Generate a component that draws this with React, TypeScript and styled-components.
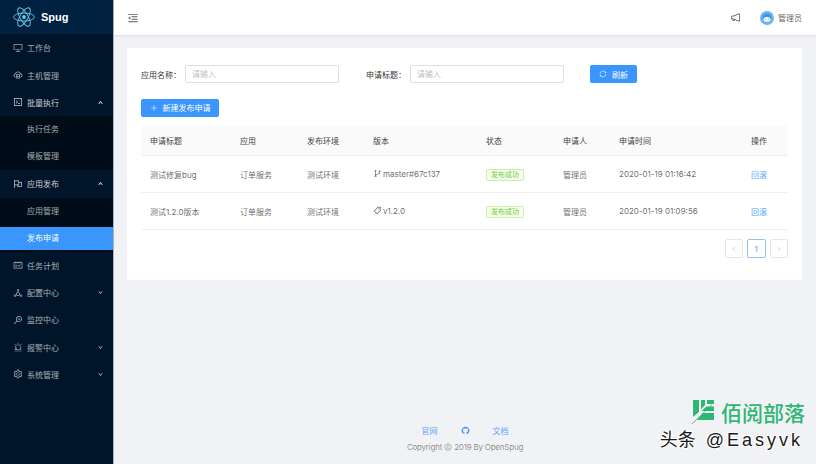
import React from 'react';
import styled, { createGlobalStyle } from 'styled-components';
import {
  AiOutlineDesktop, AiOutlineCloudServer, AiOutlineCode, AiOutlineFlag, AiOutlineSchedule,
  AiOutlineDeploymentUnit, AiOutlineMonitor, AiOutlineAlert, AiOutlineSetting, AiOutlineMenuFold,
  AiOutlineNotification, AiOutlineBranches, AiOutlineTag, AiOutlineSync, AiOutlinePlus,
  AiOutlineUp, AiOutlineDown, AiOutlineLeft, AiOutlineRight, AiFillGithub, AiOutlineCopyright,
} from 'react-icons/ai';

const GlobalStyle = createGlobalStyle`
  html, body { margin: 0; padding: 0; }
  body {
    width: 816px;
    height: 464px;
    overflow: hidden;
    font-family: Inter, "Noto Sans CJK SC", sans-serif;
    font-size: 8px;
    background: #f0f2f5;
  }
  * { box-sizing: border-box; }
`;

const menu = [
  { icon: <AiOutlineDesktop />, label: '工作台' },
  { icon: <AiOutlineCloudServer />, label: '主机管理' },
  { icon: <AiOutlineCode />, label: '批量执行', arrow: 'up', subs: [{ label: '执行任务' }, { label: '模板管理' }] },
  { icon: <AiOutlineFlag />, label: '应用发布', arrow: 'up', subs: [{ label: '应用管理' }, { label: '发布申请', active: true }] },
  { icon: <AiOutlineSchedule />, label: '任务计划' },
  { icon: <AiOutlineDeploymentUnit />, label: '配置中心', arrow: 'down' },
  { icon: <AiOutlineMonitor />, label: '监控中心' },
  { icon: <AiOutlineAlert />, label: '报警中心', arrow: 'down' },
  { icon: <AiOutlineSetting />, label: '系统管理', arrow: 'down' },
];

const rows = [
  { title: '测试修复bug', version: 'master#67c137', icon: <AiOutlineBranches />, time: '2020-01-19 01:16:42' },
  { title: '测试1.2.0版本', version: 'v1.2.0', icon: <AiOutlineTag />, time: '2020-01-19 01:09:56' },
];

const AtomLogo = () => (
  <svg width="22" height="20" viewBox="-11 -10 22 20" fill="none" stroke="#6ccbea" strokeWidth="0.9">
    <ellipse rx="10.4" ry="4" />
    <ellipse rx="10.4" ry="4" transform="rotate(60)" />
    <ellipse rx="10.4" ry="4" transform="rotate(120)" />
    <circle r="1.9" fill="#6ccbea" stroke="none" />
  </svg>
);

const AvatarFace = () => (
  <svg width="14" height="14" viewBox="0 0 14 14">
    <circle cx="7" cy="7" r="7" fill="#6bb6f7" />
    <circle cx="7" cy="7" r="4.6" fill="#3f97e8" />
    <ellipse cx="7" cy="8.6" rx="3.6" ry="2.5" fill="#f4f9fe" />
    <circle cx="5.7" cy="8.3" r="0.5" fill="#3f97e8" />
    <circle cx="8.3" cy="8.3" r="0.5" fill="#3f97e8" />
  </svg>
);

const LeafLogo = () => (
  <svg width="28" height="26" viewBox="-1 -1 28 26">
    <g fill="#2eb673">
      <path d="M0 0H6V12L0 17Z" />
      <path d="M8 0H12V5L8 9.5Z" />
      <path d="M14 0H21V4H14Z" />
      <path d="M13.5 6.5H21V11H8.5Z" />
      <path d="M4 20L10 13H21V20Z" />
    </g>
    <path d="M-1 24L19 4.5" stroke="#2eb673" strokeWidth="0.8" />
  </svg>
);

const App = () => (
  <Page>
    <GlobalStyle />
    <Sider>
      <Brand>
        <AtomLogo />
        <BrandName>Spug</BrandName>
      </Brand>
      {menu.map((item) => (
        <React.Fragment key={item.label}>
          <MenuRow $open={!!item.subs}>
            <MenuIcon>{item.icon}</MenuIcon>
            <span>{item.label}</span>
            {item.arrow && (
              <Arrow $open={item.arrow === 'up'}>
                {item.arrow === 'up' ? <AiOutlineUp /> : <AiOutlineDown />}
              </Arrow>
            )}
          </MenuRow>
          {item.subs && (
            <SubMenu>
              {item.subs.map((sub) => (
                <SubRow key={sub.label}>
                  <SubLabel $active={!!sub.active}>{sub.label}</SubLabel>
                </SubRow>
              ))}
            </SubMenu>
          )}
        </React.Fragment>
      ))}
    </Sider>
    <Main>
      <Header>
        <Trigger><AiOutlineMenuFold /></Trigger>
        <Notice><AiOutlineNotification /></Notice>
        <User>
          <AvatarFace />
          <span>管理员</span>
        </User>
      </Header>
      <Card>
        <FilterBar>
          <FieldLabel $width={44}>应用名称：</FieldLabel>
          <SearchInput placeholder="请输入" />
          <FieldLabel $width={44} $gap={27}>申请标题：</FieldLabel>
          <SearchInput placeholder="请输入" />
          <PrimaryButton $gap={26} $width={47}><AiOutlineSync />刷新</PrimaryButton>
        </FilterBar>
        <PrimaryButton $width={78} $top={15.6}><AiOutlinePlus />新建发布申请</PrimaryButton>
        <Table>
          <colgroup>
            {[90, 67, 66, 113, 77, 56, 132, 46].map((w, i) => <col key={i} width={w} />)}
          </colgroup>
          <thead>
            <tr>
              {['申请标题', '应用', '发布环境', '版本', '状态', '申请人', '申请时间', '操作'].map((h) => <Th key={h}>{h}</Th>)}
            </tr>
          </thead>
          <tbody>
            {rows.map((r) => (
              <tr key={r.title}>
                <Td>{r.title}</Td>
                <Td>订单服务</Td>
                <Td>测试环境</Td>
                <Td><VersionIcon>{r.icon}</VersionIcon>{r.version}</Td>
                <Td><StatusTag>发布成功</StatusTag></Td>
                <Td>管理员</Td>
                <Td>{r.time}</Td>
                <Td><ActionLink>回滚</ActionLink></Td>
              </tr>
            ))}
          </tbody>
        </Table>
        <Pagination>
          <PageButton><AiOutlineLeft /></PageButton>
          <PageButton $current>1</PageButton>
          <PageButton><AiOutlineRight /></PageButton>
        </Pagination>
      </Card>
      <Footer>
        <FooterLinks>
          <FooterLink>官网</FooterLink>
          <FooterLink><AiFillGithub /></FooterLink>
          <FooterLink>文档</FooterLink>
        </FooterLinks>
        <Copyright>Copyright <AiOutlineCopyright /> 2019 By OpenSpug</Copyright>
      </Footer>
    </Main>
    <Watermark>
      <WatermarkBrand><LeafLogo /><span>佰阅部落</span></WatermarkBrand>
      <WatermarkAuthor>头条<AuthorHandle>@Easyvk</AuthorHandle></WatermarkAuthor>
    </Watermark>
  </Page>
);

export default App;

const Page = styled.div`
  position: relative;
  display: flex;
  width: 816px;
  height: 464px;
  overflow: hidden;
`;

const Sider = styled.aside`
  flex: 0 0 114px;
  background: #001529;
  border-right: 1px solid #aab4c2;
  color: rgba(255, 255, 255, 0.65);
`;

const Brand = styled.div`
  display: flex;
  align-items: center;
  gap: 6px;
  height: 34.4px;
  padding-left: 13px;
  background: #002140;
`;

const BrandName = styled.span`
  color: #fff;
  font-family: "Liberation Sans", sans-serif;
  font-size: 11px;
  font-weight: 700;
`;

const MenuRow = styled.div<{ $open: boolean }>`
  display: flex;
  align-items: center;
  height: 27.2px;
  padding: 0 10px 0 13px;
  color: ${(p) => (p.$open ? 'rgba(255, 255, 255, 0.8)' : 'rgba(255, 255, 255, 0.65)')};
`;

const MenuIcon = styled.span`
  display: flex;
  width: 14px;
  font-size: 10px;
`;

const Arrow = styled.span<{ $open: boolean }>`
  display: flex;
  margin-left: auto;
  font-size: 5px;
  color: ${(p) => (p.$open ? '#fff' : 'rgba(255, 255, 255, 0.65)')};
  svg { stroke: currentColor; stroke-width: 70; }
`;

const SubMenu = styled.div`
  background: #000c17;
`;

const SubRow = styled.div`
  display: flex;
  align-items: center;
  height: 27.2px;
`;

const SubLabel = styled.div<{ $active: boolean }>`
  flex: 1;
  height: 22.6px;
  line-height: 22.6px;
  padding-left: 27px;
  background: ${(p) => (p.$active ? '#3a95ff' : 'transparent')};
  color: ${(p) => (p.$active ? '#fff' : 'rgba(255, 255, 255, 0.65)')};
`;

const Main = styled.main`
  flex: 1;
  display: flex;
  flex-direction: column;
  min-width: 0;
`;

const Header = styled.header`
  display: flex;
  align-items: center;
  height: 35px;
  padding-right: 14px;
  background: #fff;
  box-shadow: 0 1px 2px rgba(0, 21, 41, 0.1);
  color: rgba(0, 0, 0, 0.65);
`;

const Trigger = styled.span`
  display: flex;
  margin-left: 13px;
  font-size: 12px;
`;

const Notice = styled.span`
  display: flex;
  margin-left: auto;
  font-size: 11px;
`;

const User = styled.div`
  display: flex;
  align-items: center;
  gap: 4px;
  margin-left: 19px;
`;

const Card = styled.section`
  margin: 13px 14px 0 13px;
  height: 232px;
  padding: 17px 14px 0;
  background: #fff;
`;

const FilterBar = styled.div`
  display: flex;
  align-items: center;
  height: 18px;
`;

const FieldLabel = styled.label<{ $width: number; $gap?: number }>`
  width: ${(p) => p.$width}px;
  margin-left: ${(p) => p.$gap ?? 0}px;
  color: rgba(0, 0, 0, 0.85);
  white-space: nowrap;
`;

const SearchInput = styled.input`
  width: 154px;
  height: 18px;
  padding: 0 6px;
  border: 1px solid #dedede;
  border-radius: 2px;
  outline: none;
  font: inherit;
  &::placeholder { color: #bfbfbf; }
`;

const PrimaryButton = styled.button<{ $width: number; $gap?: number; $top?: number }>`
  display: flex;
  align-items: center;
  justify-content: center;
  gap: 5px;
  width: ${(p) => p.$width}px;
  height: 18.4px;
  margin: ${(p) => p.$top ?? 0}px 0 0 ${(p) => p.$gap ?? 0}px;
  padding: 0;
  border: 0;
  border-radius: 2px;
  background: #3a95ff;
  color: #fff;
  font: inherit;
  svg { font-size: 8px; }
`;

const Table = styled.table`
  width: 647px;
  margin-top: 9px;
  table-layout: fixed;
  border-collapse: collapse;
`;

const Th = styled.th`
  height: 30px;
  padding: 0 0 0 9px;
  background: #fafafa;
  border-bottom: 1px solid #efefef;
  color: rgba(0, 0, 0, 0.8);
  font-weight: 400;
  text-align: left;
`;

const Td = styled.td`
  height: 37px;
  padding: 0 0 0 9px;
  border-bottom: 1px solid #efefef;
  color: rgba(0, 0, 0, 0.62);
  white-space: nowrap;
`;

const VersionIcon = styled.span`
  display: inline-block;
  margin-right: 1px;
  vertical-align: -1px;
  font-size: 9px;
`;

const StatusTag = styled.span`
  display: inline-block;
  height: 12.5px;
  padding: 0 4px;
  margin-top: 1px;
  line-height: 10.5px;
  border: 1px solid #cdeea8;
  border-radius: 2px;
  background: #f6ffed;
  color: #72cc3c;
  font-size: 7px;
  vertical-align: middle;
`;

const ActionLink = styled.a`
  color: #5aa7fb;
`;

const Pagination = styled.div`
  display: flex;
  justify-content: flex-end;
  gap: 4px;
  margin-top: 9px;
`;

const PageButton = styled.button<{ $current?: boolean }>`
  display: flex;
  align-items: center;
  justify-content: center;
  width: 18.5px;
  height: 18.5px;
  padding: 0;
  border: 1px solid ${(p) => (p.$current ? '#8ec2fb' : '#e6e6e6')};
  border-radius: 2px;
  background: #fff;
  color: ${(p) => (p.$current ? '#5aa7fb' : '#c4c4c4')};
  font: inherit;
  svg { font-size: 6px; }
`;

const Footer = styled.footer`
  margin-top: auto;
  padding-bottom: 11px;
  text-align: center;
`;

const FooterLinks = styled.div`
  display: flex;
  justify-content: center;
  align-items: center;
  gap: 23px;
  height: 12px;
  margin-bottom: 5px;
`;

const FooterLink = styled.a`
  display: flex;
  color: #5aa7fb;
  svg { font-size: 9px; color: #3a95ff; }
`;

const Copyright = styled.div`
  height: 12px;
  line-height: 12px;
  letter-spacing: -0.22px;
  color: rgba(0, 0, 0, 0.45);
  svg { vertical-align: -1px; }
`;

const Watermark = styled.div`
  position: absolute;
  right: 11px;
  bottom: 13px;
  display: flex;
  flex-direction: column;
  align-items: flex-end;
  pointer-events: none;
`;

const WatermarkBrand = styled.div`
  display: flex;
  align-items: center;
  gap: 1px;
  color: #2eb673;
  font-family: "Noto Sans CJK SC", sans-serif;
  font-size: 21px;
  font-weight: 500;
  line-height: 26px;
`;

const WatermarkAuthor = styled.div`
  margin-top: 2px;
  margin-right: 2px;
  color: #1a1a1a;
  font-family: "Noto Sans CJK SC", sans-serif;
  font-size: 18px;
  line-height: 22px;
  white-space: nowrap;
  text-shadow: 1px 1px 0 #fff, -1px -1px 0 #fff, 1px -1px 0 #fff, -1px 1px 0 #fff;
`;

const AuthorHandle = styled.span`
  margin-left: 10px;
  font-family: "Liberation Sans", sans-serif;
  letter-spacing: 3px;
`;
